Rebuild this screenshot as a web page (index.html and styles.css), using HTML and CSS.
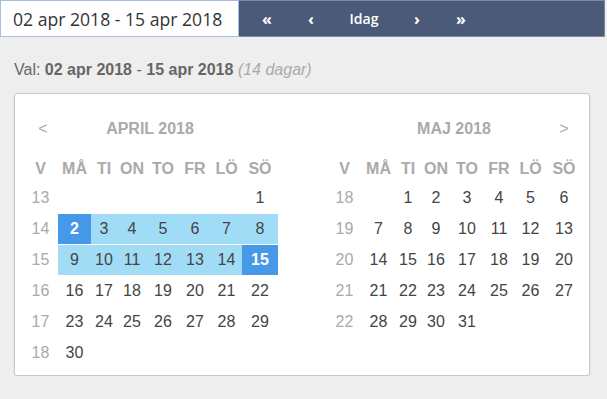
FILE: index.html
```html
<!DOCTYPE html>
<html lang="sv">
<head>
    <meta charset="UTF-8">
    <meta name="viewport" content="width=device-width, initial-scale=1.0">
    <title>Datumintervall</title>
    <link rel="stylesheet" href="styles.css">
</head>
<body>
    <div class="toolbar">
        <input class="range-input" type="text" value="02 apr 2018 - 15 apr 2018">
        <nav class="range-nav">
            <button class="nav-btn">&laquo;</button>
            <button class="nav-btn">&lsaquo;</button>
            <button class="nav-btn today-btn">Idag</button>
            <button class="nav-btn">&rsaquo;</button>
            <button class="nav-btn">&raquo;</button>
        </nav>
    </div>

    <p class="summary">Val: <b>02 apr 2018</b> - <b>15 apr 2018</b> <i>(14 dagar)</i></p>

    <div class="card">
        <div class="month">
            <span class="arrow">&lt;</span>
            <span class="month-title">April 2018</span>
            <span class="arrow"></span>

            <span class="head wk">V</span><span class="head">MÅ</span><span class="head">TI</span><span class="head">ON</span><span class="head">TO</span><span class="head">FR</span><span class="head">LÖ</span><span class="head">SÖ</span>

            <span class="wk">13</span><span></span><span></span><span></span><span></span><span></span><span></span><span class="day">1</span>
            <span class="wk">14</span><span class="day edge">2</span><span class="day range">3</span><span class="day range">4</span><span class="day range">5</span><span class="day range">6</span><span class="day range">7</span><span class="day range">8</span>
            <span class="wk">15</span><span class="day range">9</span><span class="day range">10</span><span class="day range">11</span><span class="day range">12</span><span class="day range">13</span><span class="day range">14</span><span class="day edge">15</span>
            <span class="wk">16</span><span class="day">16</span><span class="day">17</span><span class="day">18</span><span class="day">19</span><span class="day">20</span><span class="day">21</span><span class="day">22</span>
            <span class="wk">17</span><span class="day">23</span><span class="day">24</span><span class="day">25</span><span class="day">26</span><span class="day">27</span><span class="day">28</span><span class="day">29</span>
            <span class="wk">18</span><span class="day">30</span>
        </div>

        <div class="month">
            <span class="arrow"></span>
            <span class="month-title">Maj 2018</span>
            <span class="arrow">&gt;</span>

            <span class="head wk">V</span><span class="head">MÅ</span><span class="head">TI</span><span class="head">ON</span><span class="head">TO</span><span class="head">FR</span><span class="head">LÖ</span><span class="head">SÖ</span>

            <span class="wk">18</span><span></span><span class="day">1</span><span class="day">2</span><span class="day">3</span><span class="day">4</span><span class="day">5</span><span class="day">6</span>
            <span class="wk">19</span><span class="day">7</span><span class="day">8</span><span class="day">9</span><span class="day">10</span><span class="day">11</span><span class="day">12</span><span class="day">13</span>
            <span class="wk">20</span><span class="day">14</span><span class="day">15</span><span class="day">16</span><span class="day">17</span><span class="day">18</span><span class="day">19</span><span class="day">20</span>
            <span class="wk">21</span><span class="day">21</span><span class="day">22</span><span class="day">23</span><span class="day">24</span><span class="day">25</span><span class="day">26</span><span class="day">27</span>
            <span class="wk">22</span><span class="day">28</span><span class="day">29</span><span class="day">30</span><span class="day">31</span>
        </div>
    </div>
</body>
</html>
```

FILE: styles.css
```css
* {
    margin: 0;
    padding: 0;
    box-sizing: border-box;
}

body {
    background: #eeeeee;
    font-family: 'Liberation Sans', Arial, sans-serif;
    color: #333;
}

.toolbar {
    display: flex;
    width: 605px;
    height: 37px;
}

.range-input {
    width: 239px;
    height: 37px;
    border: 1px solid #a9bde2;
    background: #fff;
    padding: 0 12px;
    font-family: 'Open Sans', sans-serif;
    font-size: 17.6px;
    color: #333;
    outline: none;
}

.range-nav {
    flex: 1;
    display: flex;
    align-items: center;
    padding-left: 6px;
    background: #4a5a78;
    border: 1px solid #7f8ba2;
    border-left: none;
}

.nav-btn {
    width: 44px;
    height: 100%;
    border: none;
    background: none;
    color: #fff;
    font-family: 'Open Sans', sans-serif;
    font-size: 16px;
    font-weight: 700;
    cursor: pointer;
}

.today-btn {
    width: 62px;
    font-size: 14px;
    font-weight: 600;
}

.summary {
    margin: 23px 14px 0;
    line-height: 20px;
    font-size: 16px;
    color: #666;
}

.summary i {
    color: #aaa;
}

.card {
    display: flex;
    gap: 54px;
    width: 576px;
    height: 283px;
    margin: 13px 0 0 14px;
    padding: 20px 0 0 13px;
    background: #fff;
    border: 1px solid #c8c8c8;
    border-radius: 3px;
    box-shadow: 0 1px 2px rgba(0, 0, 0, 0.08);
}

.month {
    display: grid;
    grid-template-columns: 30px 33px 26px 30px 32px 32px 31px 36px;
    grid-template-rows: 41px 26px repeat(6, 30px);
    row-gap: 1px;
    font-size: 16px;
    text-align: center;
    line-height: 30px;
}

.arrow {
    height: 30px;
    color: #aaa;
}

.month-title {
    grid-column: span 6;
    height: 30px;
    font-weight: 700;
    color: #aaa;
    text-transform: uppercase;
}

.head {
    line-height: 26px;
    font-weight: 700;
    color: #aaa;
}

.wk {
    padding-right: 5px;
    color: #aaa;
}

.day {
    color: #444;
}

.day.range {
    background: #a1dcf6;
}

.day.edge {
    background: #4699e8;
    color: #fff;
    font-weight: 700;
}
```
